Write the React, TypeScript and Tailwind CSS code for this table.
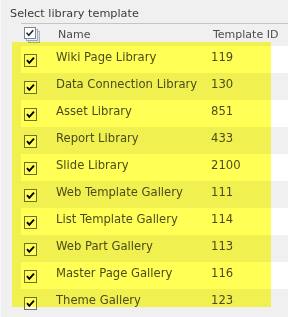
import { Fragment } from "react";

type Template = { name: string; id: number };

const templates: Template[] = [
  { name: "Wiki Page Library", id: 119 },
  { name: "Data Connection Library", id: 130 },
  { name: "Asset Library", id: 851 },
  { name: "Report Library", id: 433 },
  { name: "Slide Library", id: 2100 },
  { name: "Web Template Gallery", id: 111 },
  { name: "List Template Gallery", id: 114 },
  { name: "Web Part Gallery", id: 113 },
  { name: "Master Page Gallery", id: 116 },
  { name: "Theme Gallery", id: 123 },
];

function CheckBox() {
  return (
    <svg width="13" height="13" viewBox="0 0 13 13" className="block">
      <rect x="0.5" y="0.5" width="12" height="12" fill="#fff" stroke="#6f6f6f" />
      <path d="M3 6.2 L5.3 8.8 L10 3.6" fill="none" stroke="#000" strokeWidth="1.9" />
    </svg>
  );
}

function SelectAllIcon() {
  return (
    <svg width="17" height="16" viewBox="0 0 17 16" className="block">
      <rect x="4.5" y="4.5" width="11" height="11" fill="#dfe3ea" stroke="#aab3c0" />
      <rect x="2.5" y="2.5" width="11" height="11" fill="#eef0f4" stroke="#9ea8b6" />
      <rect x="0.5" y="0.5" width="11" height="11" fill="#fff" stroke="#7c8796" />
      <path d="M2.6 5.8 L4.8 8.2 L9.2 3.2" fill="none" stroke="#1f2a38" strokeWidth="1.6" />
    </svg>
  );
}

export default function App() {
  return (
    <div
      className="relative w-[288px] h-[317px] overflow-hidden bg-[#f0f0f0] border-l border-[#f8f8f8] text-[11px] text-[#4c4c4c]"
      style={{ fontFamily: '"DejaVu Sans", Verdana, sans-serif' }}
    >
      <div className="h-[23px] pl-[9px] pt-[7px] leading-[14px] text-[11.25px] text-[#3b3b3b]">
        Select library template
      </div>

      <div className="ml-[20px] border-t border-[#c5c5c5]">
        <div className="grid grid-cols-[32px_158px_1fr] h-[22px] items-center">
          <div className="pl-[3px]">
            <SelectAllIcon />
          </div>
          <div className="pl-[5px]">Name</div>
          <div className="pl-[2px]">Template ID</div>
        </div>

        {templates.map((t, i) => (
          <Fragment key={t.id}>
            <div
              className={`grid grid-cols-[32px_158px_1fr] h-[27px] items-center text-[11.6px] ${
                i % 2 === 0 ? "bg-white" : "bg-[#f0f0f0]"
              }`}
            >
              <div className="pl-[3px] pt-[1px]">
                <CheckBox />
              </div>
              <div className="pl-[3px] pb-[3px]">{t.name}</div>
              <div className="pb-[3px]">{t.id}</div>
            </div>
          </Fragment>
        ))}
      </div>

      {/* highlighter pass over the list */}
      <div className="absolute left-[11px] top-[42px] w-[259px] h-[265px] bg-[#ffff55] mix-blend-multiply pointer-events-none" />
    </div>
  );
}
